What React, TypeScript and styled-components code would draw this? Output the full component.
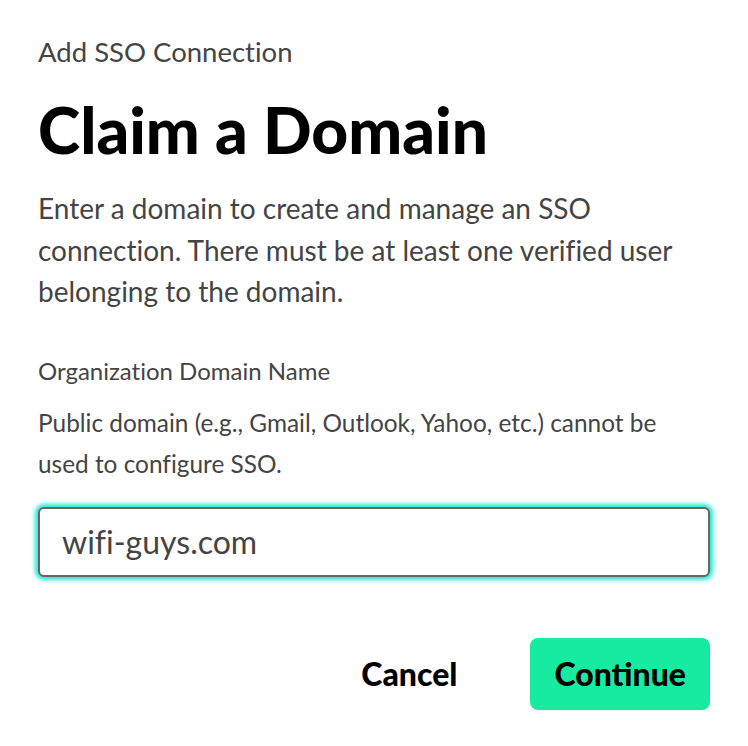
import React from "react";
import styled, { createGlobalStyle } from "styled-components";

const Global = createGlobalStyle`
  html, body { margin: 0; padding: 0; background: #fff; }
  body {
    font-family: Lato, "Noto Sans", sans-serif;
    -webkit-font-smoothing: antialiased;
    font-variant-ligatures: none;
  }
`;

const Page = styled.div`
  box-sizing: border-box;
  width: 748px;
  min-height: 746px;
  padding: 36px 38px 0 38px;
  display: flex;
  flex-direction: column;
`;

const Eyebrow = styled.div`
  font-size: 27.5px;
  line-height: 32px;
  color: #444;
`;

const Title = styled.h1`
  margin: 26px 0 0 0;
  font-size: 64px;
  line-height: 72px;
  font-weight: 900;
  color: #000;
`;

const Intro = styled.p`
  margin: 22px 0 0 0;
  font-size: 28px;
  line-height: 41.5px;
  color: #444;
`;

const Label = styled.label`
  margin-top: 44px;
  font-size: 24px;
  line-height: 28px;
  color: #444;
`;

const Help = styled.p`
  margin: 17px 0 0 0;
  font-size: 24.4px;
  line-height: 41px;
  color: #444;
  white-space: nowrap;
`;

const Input = styled.input`
  box-sizing: border-box;
  margin-top: 23px;
  width: 100%;
  height: 70px;
  padding: 0 22px;
  border: 2px solid #666;
  border-radius: 6px;
  font-family: Lato, "Noto Sans", sans-serif;
  font-variant-ligatures: none;
  font-size: 32px;
  color: #444;
  outline: none;
  box-shadow: 0 0 4px 3px #1fe8d0;
`;

const Actions = styled.div`
  margin-top: 61px;
  display: flex;
  justify-content: flex-end;
  align-items: center;
  gap: 49px;
`;

const Button = styled.button<{ $primary?: boolean }>`
  box-sizing: border-box;
  height: 72px;
  padding: 0 24px;
  min-width: ${(p) => (p.$primary ? "179px" : "auto")};
  border: none;
  border-radius: 8px;
  background: ${(p) => (p.$primary ? "#17eba0" : "transparent")};
  font-family: Lato, "Noto Sans", sans-serif;
  font-size: 32px;
  font-weight: 900;
  color: #000;
  cursor: pointer;
`;

export default function App() {
  return (
    <>
      <Global />
      <Page>
        <Eyebrow>Add SSO Connection</Eyebrow>
        <Title>Claim a Domain</Title>
        <Intro>
          Enter a domain to create and manage an SSO
          <br />
          connection. There must be at least one verified user
          <br />
          belonging to the domain.
        </Intro>
        <Label htmlFor="domain">Organization Domain Name</Label>
        <Help>
          Public domain (e.g., Gmail, Outlook, Yahoo, etc.) cannot be
          <br />
          used to configure SSO.
        </Help>
        <Input id="domain" defaultValue="wifi-guys.com" />
        <Actions>
          <Button>Cancel</Button>
          <Button $primary>Continue</Button>
        </Actions>
      </Page>
    </>
  );
}
